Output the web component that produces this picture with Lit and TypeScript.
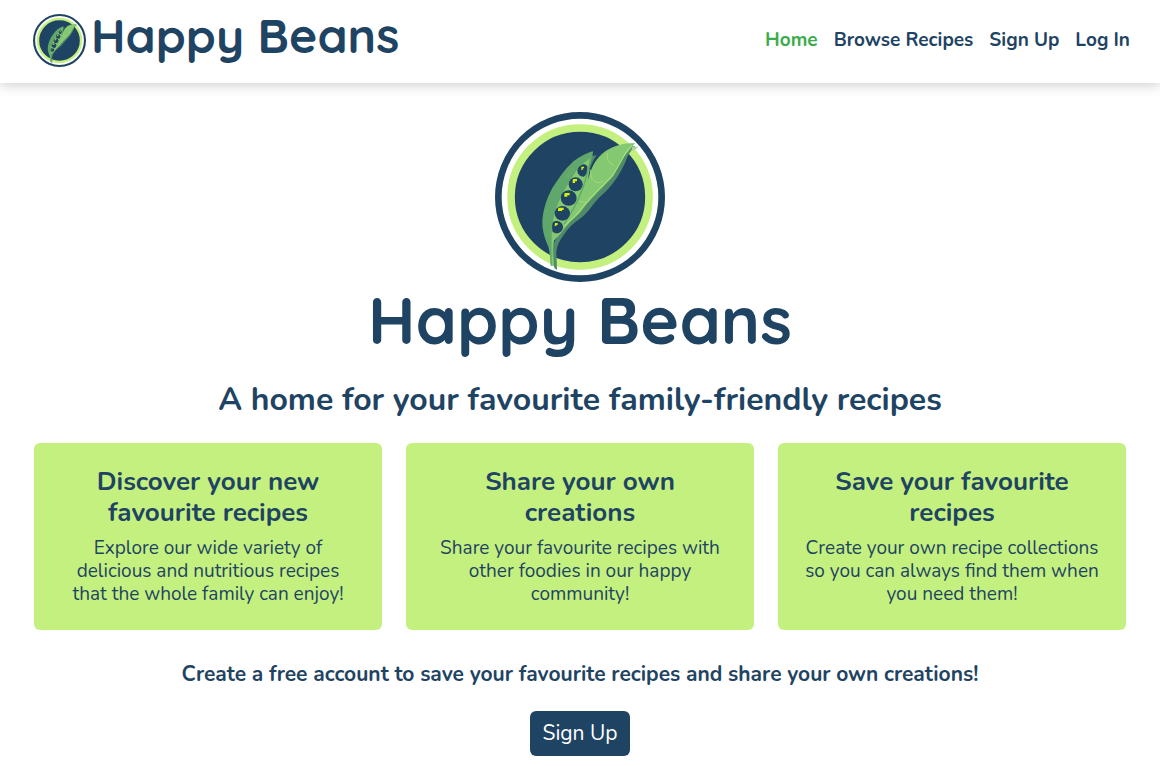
import { LitElement, html, css } from "lit";
import { customElement, property } from "lit/decorators.js";

@customElement("bean-emblem")
class BeanEmblem extends LitElement {
  static styles = css`
    :host { display: block; flex: none; }
    svg { display: block; width: 100%; height: auto; }
  `;

  render() {
    return html`
      <svg viewBox="18 20 510 510" aria-hidden="true">
        <circle cx="273" cy="275" r="245" fill="#fff" stroke="#1f4463" stroke-width="20" />
        <circle cx="273" cy="275" r="207" fill="#1f4463" stroke="#c4f07f" stroke-width="23" />
        <path fill="#508a6b" d="M412 126 L438 122 L430 134 C424 138 418 148 413 160 C396 204 370 242 338 270 C312 294 300 320 277 337 C253 353 236 369 226 386 C212 404 204 420 202 440 L204 494 L196 488 L186 430 L228 350 Z" />
        <path fill="#a9d79a" d="M430 124 L448 124 L437 134 L426 138 Z" />
        <path fill="#508a6b" d="M300 160 L308 152 L323 150 C310 166 304 185 298 205 Z" />
        <path fill="#60a76b" d="M312 138 C289 144 265 158 249 172 C226 193 208 220 190 248 C171 283 161 320 160 350 C160 380 169 403 178 424 C184 443 183 465 185 481 L195 481 L193 390 L240 290 L296 190 C306 174 311 158 312 138 Z" />
        <path fill="#85c872" d="M302 158 C292 169 285 172 275 180 C262 194 250 216 232 244 C210 280 189 330 188 384 C188 410 187 445 189 481 L195 482 C192 450 188 430 196 405 C212 390 228 367 246 346 L290 280 L300 200 Z" />
        <path fill="#85c872" d="M438 113 C402 113 371 123 347 139 C321 159 309 183 302 207 C292 244 270 283 248 320 C236 342 227 354 225 365 C243 348 267 333 286 305 C318 267 342 246 371 215 C388 188 400 156 422 134 Z" />
        <path fill="none" stroke="#60a76b" stroke-width="4" d="M302 174 C291 226 278 270 251 314 C240 332 232 344 226 357" />
        <path fill="none" stroke="#b4e979" stroke-width="3" d="M429 121 C406 138 395 178 370 210 C341 243 312 266 288 296 C272 320 249 341 226 362" />
        <path fill="none" stroke="#a6dc72" stroke-width="3" d="M356 143 C351 159 358 175 374 178 M304 193 C302 227 326 241 344 226 M270 286 C278 292 284 290 292 291" />
        <path fill="none" stroke="#74b66d" stroke-width="2" d="M233 213 C239 199 246 194 253 190 M238 215 C246 202 252 199 258 196" />
        <g fill="#1f4463">
          <path d="M279 178 C287 175 293 178 295 184 C295 199 291 212 284 214 C273 214 265 205 265 196 C266 187 271 181 279 178 Z" />
          <ellipse cx="260" cy="237" rx="21" ry="21" />
          <ellipse cx="239" cy="278" rx="24" ry="23" />
          <ellipse cx="220" cy="324" rx="23" ry="22" />
          <path d="M199 347 C211 345 222 353 222 365 C222 377 211 385 200 384 L191 380 C188 368 189 356 192 350 Z" />
        </g>
        <g fill="#d7f205">
          <path d="M277 184 h8 v5 h-4 v5 h-4 Z" />
          <path d="M253 221 h11 v7 h-6 v5 h-7 v-8 Z" />
          <path d="M228 263 h14 v7 h-7 v4 h-9 v-8 Z" />
          <path d="M210 307 h14 v7 h-5 v3 h-12 v-7 Z" />
          <path d="M198 353 h8 v6 h-4 v3 h-5 Z" />
        </g>
      </svg>
    `;
  }
}

@customElement("feature-card")
class FeatureCard extends LitElement {
  @property() heading = "";
  @property() text = "";

  static styles = css`
    :host {
      display: block;
      padding: 23px 24px 24px;
      border-radius: 6px;
      background: #c4f07f;
      text-align: center;
    }
    .heading { margin: 0 0 9px; padding: 0 20px; font-size: 26px; line-height: 31px; font-weight: 700; }
    .text { margin: 0; font-size: 19px; line-height: 23px; }
  `;

  render() {
    return html`
      <h2 class="heading">${this.heading}</h2>
      <p class="text">${this.text}</p>
    `;
  }
}

const LINKS = [
  { label: "Home", active: true },
  { label: "Browse Recipes", active: false },
  { label: "Sign Up", active: false },
  { label: "Log In", active: false },
];

const FEATURES = [
  {
    heading: "Discover your new favourite recipes",
    text: "Explore our wide variety of delicious and nutritious recipes that the whole family can enjoy!",
  },
  {
    heading: "Share your own creations",
    text: "Share your favourite recipes with other foodies in our happy community!",
  },
  {
    heading: "Save your favourite recipes",
    text: "Create your own recipe collections so you can always find them when you need them!",
  },
];

@customElement("app-root")
class AppRoot extends LitElement {
  static styles = css`
    :host {
      display: block;
      background: #fff;
      color: #1f4463;
      font-family: Nunito, "Open Sans", sans-serif;
    }
    .bar {
      display: flex;
      align-items: flex-start;
      justify-content: space-between;
      padding: 14px 30px 16px 33px;
      box-shadow: 0 2px 12px rgba(0, 0, 0, 0.2);
    }
    .brand { display: flex; gap: 5px; color: inherit; text-decoration: none; }
    .brand-emblem { width: 53px; }
    .wordmark {
      font-family: Quicksand, Lato, sans-serif;
      font-weight: 700;
      white-space: nowrap;
    }
    .wordmark-small { font-size: 48px; line-height: 42px; }
    .wordmark-large { margin: 0; font-size: 66px; line-height: 76px; }
    .nav { display: flex; gap: 16px; padding-top: 12px; }
    .link { color: inherit; text-decoration: none; font-size: 19px; line-height: 28px; font-weight: 700; }
    .active { color: #3cab4b; }
    .main {
      display: flex;
      flex-direction: column;
      align-items: center;
      padding: 29px 34px 10px;
      text-align: center;
    }
    .hero-emblem { width: 170px; }
    .tagline { margin: 22px 0 23px; font-size: 32px; line-height: 40px; font-weight: 700; }
    .cards { display: grid; grid-template-columns: repeat(3, 1fr); gap: 24px; width: 100%; }
    .invite { margin: 30px 0 23px; font-size: 21px; line-height: 28px; font-weight: 700; }
    .signup {
      border: 0;
      border-radius: 6px;
      padding: 7px 13px;
      background: #1f4463;
      color: #fff;
      font-family: inherit;
      font-size: 21px;
      line-height: 31px;
    }
  `;

  render() {
    return html`
      <header class="bar">
        <a class="brand" href="#">
          <bean-emblem class="brand-emblem"></bean-emblem>
          <span class="wordmark wordmark-small">Happy Beans</span>
        </a>
        <nav class="nav">
          ${LINKS.map((l) => html`<a class="link ${l.active ? "active" : ""}" href="#">${l.label}</a>`)}
        </nav>
      </header>
      <main class="main">
        <bean-emblem class="hero-emblem"></bean-emblem>
        <h1 class="wordmark wordmark-large">Happy Beans</h1>
        <p class="tagline">A home for your favourite family-friendly recipes</p>
        <section class="cards">
          ${FEATURES.map((f) => html`<feature-card .heading=${f.heading} .text=${f.text}></feature-card>`)}
        </section>
        <p class="invite">Create a free account to save your favourite recipes and share your own creations!</p>
        <button class="signup" type="button">Sign Up</button>
      </main>
    `;
  }
}
